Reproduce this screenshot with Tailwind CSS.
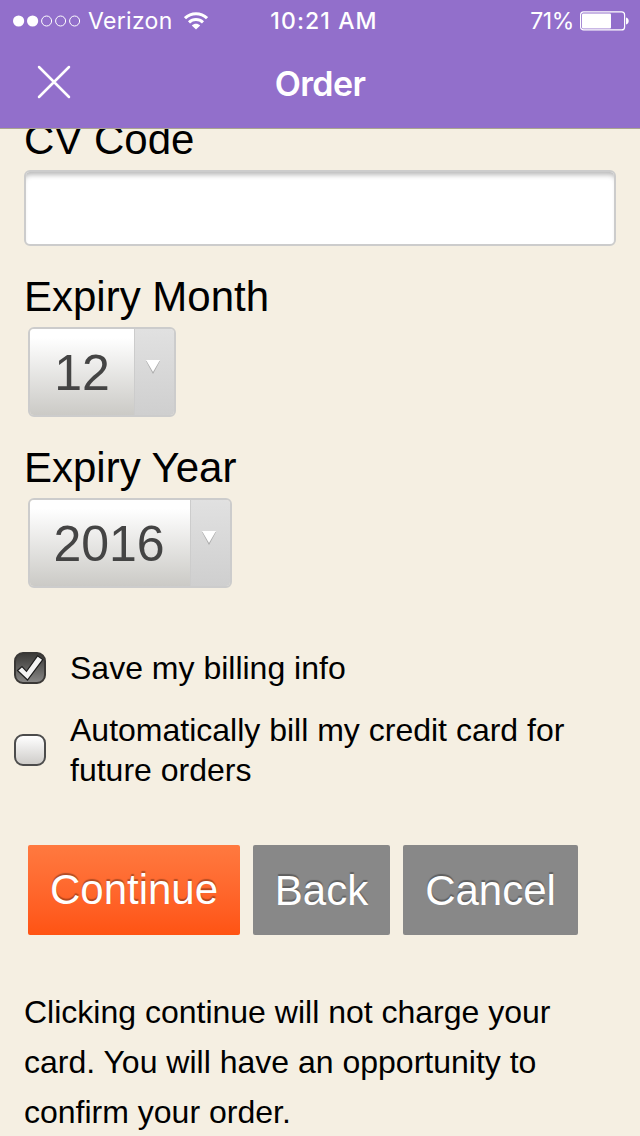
<!DOCTYPE html>
<html lang="en">
<head>
  <meta charset="UTF-8" />
  <meta name="viewport" content="width=device-width, initial-scale=1" />
  <title>Order</title>
  <script src="https://cdn.jsdelivr.net/npm/@tailwindcss/browser@4"></script>
</head>
<body class="bg-[#f5efe2] text-black font-['Liberation_Sans',Arial,sans-serif]">
  <div class="flex flex-col w-[640px] h-[1136px] overflow-hidden">
    <!-- Header -->
    <header class="h-32 shrink-0 bg-[#926fcb] text-white font-[Inter,sans-serif] shadow-[0_1px_0_#aaa48f] relative z-10">
      <div class="grid grid-cols-[1fr_auto_1fr] items-center h-[41px] pl-[13px] pr-[11px]">
        <div class="flex items-center">
          <svg class="w-[68px] h-3" viewBox="0 0 68 12" fill="none" stroke="white">
            <circle cx="5.6" cy="6" r="5.6" fill="white" stroke="none" />
            <circle cx="19.6" cy="6" r="5.6" fill="white" stroke="none" />
            <circle cx="33.6" cy="6" r="5" />
            <circle cx="47.6" cy="6" r="5" />
            <circle cx="61.6" cy="6" r="5" />
          </svg>
          <span class="ml-[7px] w-[85px] pt-px text-[23px] leading-10 tracking-[0.3px] whitespace-nowrap">Verizon</span>
          <svg class="ml-[11px] w-6 h-[18px]" viewBox="0 0 24 18" fill="none" stroke="white" stroke-width="3">
            <path d="M1 6.2C7.2 .2 16.8 .2 23 6.2" />
            <path d="M5 10.3C9 6.6 15 6.6 19 10.3" />
            <path d="M12 17.5L7.8 13.4C10.2 11.2 13.8 11.2 16.2 13.4Z" fill="white" stroke="none" />
          </svg>
        </div>
        <div class="pt-px pl-1.5 text-[23px] leading-10 font-medium tracking-[1.1px] whitespace-nowrap">10:21 AM</div>
        <div class="flex items-center justify-end">
          <span class="pt-px text-[23px] leading-10 tracking-[-0.4px]">71%</span>
          <svg class="ml-1.5 w-[49px] h-5" viewBox="0 0 49 20">
            <rect x=".6" y=".9" width="44" height="18" rx="3" fill="none" stroke="white" stroke-width="1.2" />
            <rect x="2" y="2.5" width="29" height="15" rx="1" fill="white" />
            <path d="M46 6.5C49.6 7 49.6 13 46 13.5Z" fill="white" />
          </svg>
        </div>
      </div>
      <div class="grid grid-cols-[1fr_auto_1fr] items-center h-[85px] px-[37px]">
        <svg class="w-[34px] h-[34px] -mt-1" viewBox="0 0 34 34" stroke="white" stroke-width="2.5" stroke-linecap="round">
          <path d="M2 2L32 32M32 2L2 32" />
        </svg>
        <h1 class="text-[34px] leading-[85px] font-semibold tracking-[-0.6px]">Order</h1>
      </div>
    </header>

    <!-- Card form -->
    <main class="-mt-[13px] text-[42px]">
      <div class="px-6">
        <label for="cv" class="block leading-[50px]">CV Code</label>
        <input id="cv" type="text" class="block mt-[5px] w-full h-19 bg-white border-2 border-[#ccc] rounded-md shadow-[inset_0_6px_5px_-3px_#bbb] outline-none" />

        <div class="mt-[26px] leading-[50px]">Expiry Month</div>
        <div class="mt-[5px] ml-1 flex w-[148px] h-[90px] border-2 border-[#ccc] rounded-md overflow-hidden">
          <div class="flex-1 text-center text-[50px] leading-[88px] text-[#444] bg-linear-to-b from-white from-10% to-[#cbcac6]">12</div>
          <div class="w-10 border-l border-[#ccc] bg-linear-to-b from-[#e1e1e1] to-[#cfcfcf]">
            <svg class="mt-[30px] ml-2.5 w-4 h-4" viewBox="0 0 16 16">
              <path d="M1 2H15L8 15Z" fill="#aaa" />
              <path d="M1 1H15L8 13Z" fill="white" />
            </svg>
          </div>
        </div>

        <div class="mt-[26px] leading-[50px]">Expiry Year</div>
        <div class="mt-[5px] ml-1 flex w-[204px] h-[90px] border-2 border-[#ccc] rounded-md overflow-hidden">
          <div class="flex-1 pr-0.5 text-center text-[50px] leading-[88px] text-[#444] bg-linear-to-b from-white from-10% to-[#cbcac6]">2016</div>
          <div class="w-10 border-l border-[#ccc] bg-linear-to-b from-[#e1e1e1] to-[#cfcfcf]">
            <svg class="mt-[30px] ml-2.5 w-4 h-4" viewBox="0 0 16 16">
              <path d="M1 2H15L8 15Z" fill="#aaa" />
              <path d="M1 1H15L8 13Z" fill="white" />
            </svg>
          </div>
        </div>
      </div>

      <!-- Billing options -->
      <div class="mt-[60px] pl-3.5 text-[32px] leading-10">
        <div class="flex items-center">
          <div class="w-8 h-8 shrink-0 rounded-[9px] border-2 border-[#3a3836] bg-linear-to-b from-[#3c3b39] to-[#878685]">
            <svg class="w-7 h-7" viewBox="0 0 28 28">
              <path d="M1.5 16.5L6 12.5L10.5 17.3L21.5 1.8L26.8 5.6L11.5 26Z" fill="#f4f4f4" stroke="#1c1c1c" stroke-width="1.2" />
            </svg>
          </div>
          <span class="ml-6">Save my billing info</span>
        </div>
        <div class="mt-[22px] flex items-center">
          <div class="w-8 h-8 shrink-0 rounded-[9px] border-2 border-[#4c4c4c] bg-linear-to-b from-white to-[#cfcdca]"></div>
          <span class="ml-6 w-[520px]">Automatically bill my credit card for future orders</span>
        </div>
      </div>

      <!-- Actions -->
      <div class="mt-[55px] ml-7 flex gap-[13px] text-white">
        <button class="w-[212px] h-[90px] rounded-xs bg-linear-to-b from-[#ff793f] to-[#ff5312] leading-[90px] [text-shadow:0_-2px_1px_rgba(0,0,0,0.3)]">Continue</button>
        <button class="w-[137px] h-[90px] pt-0.5 rounded-xs bg-[#888] leading-[88px] [text-shadow:0_-2px_1px_rgba(0,0,0,0.3)]">Back</button>
        <button class="w-[175px] h-[90px] pt-0.5 rounded-xs bg-[#888] leading-[88px] [text-shadow:0_-2px_1px_rgba(0,0,0,0.3)]">Cancel</button>
      </div>

      <p class="mt-[52px] ml-6 w-[560px] text-[32px] leading-[50px]">Clicking continue will not charge your card. You will have an opportunity to confirm your order.</p>
    </main>
  </div>
</body>
</html>
